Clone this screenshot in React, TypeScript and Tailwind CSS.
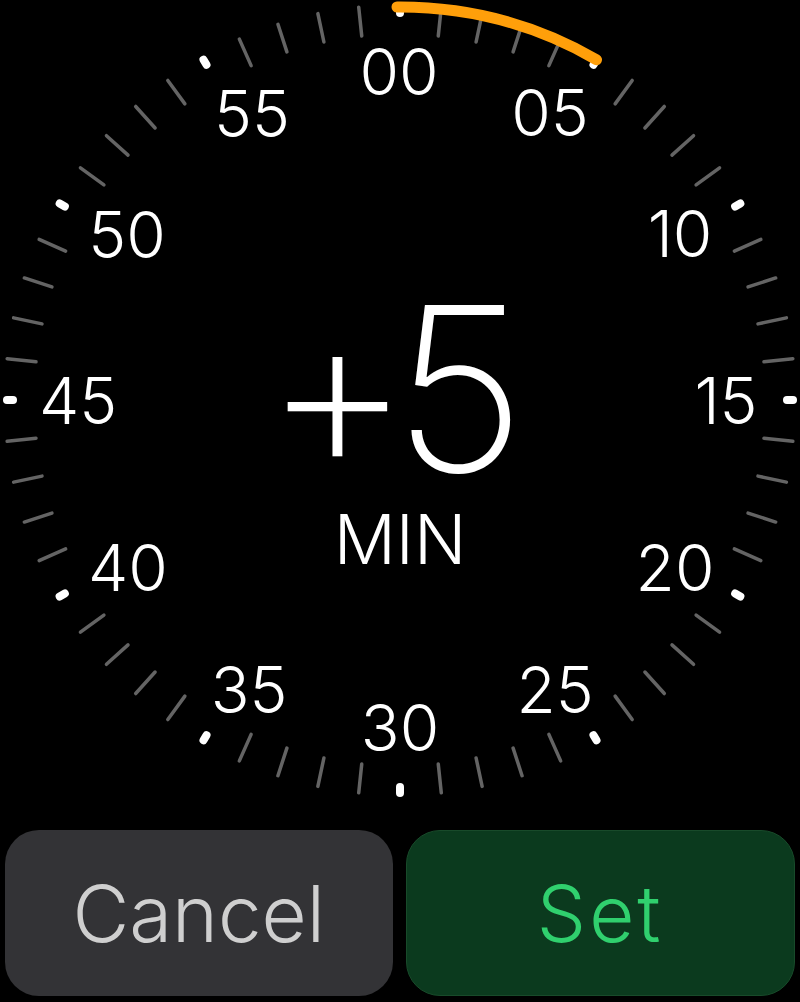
import React from "react";

const CX = 400;
const CY = 400;

// label centres, read off the dial
const labels: { text: string; x: number; y: number }[] = [
  { text: "00", x: 399, y: 72 },
  { text: "05", x: 550, y: 113 },
  { text: "10", x: 680, y: 234 },
  { text: "15", x: 726, y: 401 },
  { text: "20", x: 675, y: 568 },
  { text: "25", x: 555, y: 690 },
  { text: "30", x: 400, y: 728 },
  { text: "35", x: 249, y: 690 },
  { text: "40", x: 128, y: 568 },
  { text: "45", x: 78, y: 401 },
  { text: "50", x: 127, y: 235 },
  { text: "55", x: 252, y: 114 },
];

const polar = (r: number, deg: number) => {
  const a = (deg * Math.PI) / 180;
  return { x: CX + r * Math.sin(a), y: CY - r * Math.cos(a) };
};

const Dial = () => {
  const ticks = Array.from({ length: 60 }, (_, i) => i);
  const arcStart = polar(393, 0);
  const arcEnd = polar(393, 30);

  return (
    <svg className="absolute inset-0" width="800" height="830" viewBox="0 0 800 830">
      {ticks.map((i) => {
        const deg = i * 6;
        if (i % 5 === 0) {
          const a = polar(387, deg);
          const b = polar(393, deg);
          return (
            <line key={i} x1={a.x} y1={a.y} x2={b.x} y2={b.y} stroke="#ffffff" strokeWidth={8} strokeLinecap="round" />
          );
        }
        const a = polar(366, deg);
        const b = polar(395, deg);
        return (
          <line key={i} x1={a.x} y1={a.y} x2={b.x} y2={b.y} stroke="#646464" strokeWidth={3.5} strokeLinecap="round" />
        );
      })}
      <path
        d={`M ${arcStart.x - 3} ${arcStart.y} L ${arcStart.x} ${arcStart.y} A 393 393 0 0 1 ${arcEnd.x} ${arcEnd.y}`}
        fill="none"
        stroke="#ff9f0a"
        strokeWidth={11}
        strokeLinecap="round"
        strokeLinejoin="round"
      />
      {labels.map((l) => (
        <text
          key={l.text}
          x={l.x}
          y={l.y + 23}
          textAnchor="middle"
          fill="#ffffff"
          className="font-['Inter',sans-serif] font-light text-[64px]"
        >
          {l.text}
        </text>
      ))}
    </svg>
  );
};

export default function App() {
  return (
    <div className="w-[800px] h-[1002px] bg-black overflow-hidden font-['Inter',sans-serif]">
      <div className="relative h-[830px]">
        <Dial />
        <div className="relative flex flex-col items-center pt-[273px] text-white">
          <div className="h-[226px] text-[230px] leading-none font-extralight tracking-[-19px] pr-[30px]">+5</div>
          <div className="mt-[6px] text-[69px] leading-none font-light">MIN</div>
        </div>
      </div>
      <div className="flex gap-[13px] px-[5px] h-[166px]">
        <button className="flex-1 rounded-[34px] bg-[#333336] flex items-center justify-center text-[78px] font-light text-[#cfcfcf]">
          Cancel
        </button>
        <button className="flex-1 rounded-[34px] bg-[#0b3a1e] border border-[#184a2a] flex items-center justify-center text-[78px] font-light tracking-[3px] text-[#30d06e]">
          Set
        </button>
      </div>
    </div>
  );
}
